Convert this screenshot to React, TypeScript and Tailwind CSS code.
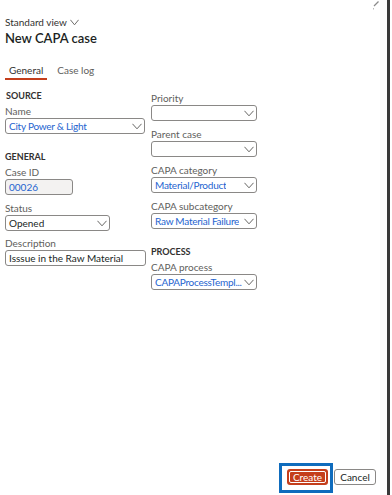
import React from "react";

const font = { fontFamily: 'Lato, "Open Sans", Arial, sans-serif' };

function Chevron({ className = "", w = 11 }: { className?: string; w?: number }) {
  return (
    <svg width={w} height="7" viewBox="0 0 11 7" className={className} preserveAspectRatio="none">
      <path d="M0.5 0.8 L5.5 5.8 L10.5 0.8" fill="none" stroke="#605e5c" strokeWidth="1" />
    </svg>
  );
}

function Label({ children }: { children: React.ReactNode }) {
  return <div className="text-[10px] leading-[12px] text-[#605e5c] mb-[1px]">{children}</div>;
}

function Select({ value, width }: { value?: string; width: string }) {
  return (
    <div
      className={`${width} h-[16px] border border-[#8a8886] rounded-[3px] flex items-center justify-between pl-[3px] pr-[2px] bg-white`}
    >
      <span className="text-[10px] leading-[14px] tracking-[-0.25px] text-[#2564cf] whitespace-nowrap overflow-hidden">
        {value}
      </span>
      <Chevron className="shrink-0" w={10} />
    </div>
  );
}

function Section({ children }: { children: React.ReactNode }) {
  return <div className="text-[9px] leading-[13px] font-bold text-[#323130]">{children}</div>;
}

export default function App() {
  return (
    <div className="w-[392px] h-[495px] bg-white flex" style={font}>
      <div className="w-[390px] h-full border-r-[3px] border-[#3a3a3a] flex flex-col relative">
        <svg width="8" height="9" viewBox="0 0 8 9" className="absolute left-[372px] top-[1px]">
          <path d="M6.5 0.5 L2 5" stroke="#8a8a8a" strokeWidth="1.3" />
          <path d="M1.5 7 L1.5 8.5" stroke="#bbbbbb" strokeWidth="1" />
        </svg>

        <div className="pl-[5px] pt-[16px]">
          <div className="flex items-center gap-[3px] text-[10px] leading-[13px] text-[#323130]">
            Standard view
            <Chevron w={9} />
          </div>
          <div className="text-[13px] leading-[18px] font-semibold text-[#201f1e]">New CAPA case</div>

          <div className="mt-[16px] flex gap-[10px] text-[10px] leading-[14px]">
            <div className="px-[4px] pb-[1px] border-b-2 border-[#c43e1c] text-[#323130]">General</div>
            <div className="text-[#605e5c]">Case log</div>
          </div>
        </div>

        <div className="flex pl-[5px] mt-[9px]">
          <div className="w-[145px] flex flex-col">
            <div className="pl-[1px]">
              <Section>SOURCE</Section>
            </div>
            <div className="mt-[3px]">
              <Label>Name</Label>
              <Select value="City Power & Light" width="w-[140px]" />
            </div>
            <div className="mt-[16px]">
              <Section>GENERAL</Section>
            </div>
            <div className="mt-[3px]">
              <Label>Case ID</Label>
              <div className="w-[68px] h-[16px] border border-[#8a8886] rounded-[3px] bg-[#f3f2f1] flex items-center pl-[3px]">
                <span className="text-[10px] leading-[13px] text-[#2564cf]">00026</span>
              </div>
            </div>
            <div className="mt-[7px]">
              <Label>Status</Label>
              <div className="w-[105px] h-[16px] border border-[#8a8886] rounded-[3px] flex items-center justify-between pl-[3px] pr-[2px]">
                <span className="text-[10px] leading-[14px] text-[#201f1e]">Opened</span>
                <Chevron w={10} />
              </div>
            </div>
            <div className="mt-[6px]">
              <Label>Description</Label>
              <div className="w-[141px] h-[16px] border border-[#8a8886] rounded-[3px] flex items-center pl-[3px]">
                <span className="text-[10px] leading-[14px] text-[#201f1e] whitespace-nowrap">Isssue in the Raw Material</span>
              </div>
            </div>
          </div>

          <div className="flex flex-col ml-[1px] pt-[3px]">
            <div>
              <Label>Priority</Label>
              <Select width="w-[106px]" />
            </div>
            <div className="mt-[7px]">
              <Label>Parent case</Label>
              <Select width="w-[106px]" />
            </div>
            <div className="mt-[7px]">
              <Label>CAPA category</Label>
              <Select value="Material/Product" width="w-[106px]" />
            </div>
            <div className="mt-[7px]">
              <Label>CAPA subcategory</Label>
              <Select value="Raw Material Failure" width="w-[106px]" />
            </div>
            <div className="mt-[16px]">
              <Section>PROCESS</Section>
            </div>
            <div className="mt-[3px]">
              <Label>CAPA process</Label>
              <Select value="CAPAProcessTempl..." width="w-[106px]" />
            </div>
          </div>
        </div>

        <div className="flex-1" />

        <div className="flex items-start justify-end pr-[11px] pb-[2px] gap-[1px]">
          <div className="w-[54px] h-[30px] border-[3px] border-[#0f6cbd] pl-[5px] pt-[3px]">
            <div className="w-[41px] h-[16px] rounded-[3px] bg-[#c43e1c] flex items-center justify-center p-[2px]">
              <div className="w-full h-full rounded-[2px] border border-white flex items-center justify-center text-[10px] leading-[10px] text-white">
                Create
              </div>
            </div>
          </div>
          <div className="mt-[6px] w-[42px] h-[16px] rounded-[3px] border border-[#8a8886] bg-white flex items-center justify-center text-[10px] text-[#201f1e]">
            Cancel
          </div>
        </div>
      </div>
    </div>
  );
}
